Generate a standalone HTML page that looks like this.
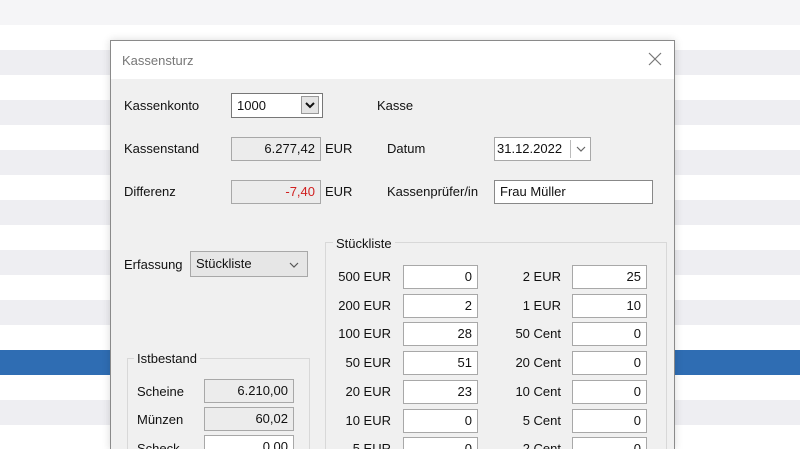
<html><head><style>
html,body{margin:0;width:800px;height:449px;overflow:hidden}
body{background:#fff;font-family:"Liberation Sans",sans-serif;font-size:13px;color:#111;position:relative}
.s{position:absolute;left:0;width:800px;height:25px;background:#eeeef2}
.a{position:absolute}
.dlg{position:absolute;left:110px;top:40px;width:563px;height:409px;background:#f0f0f0;border:1px solid #8a8a8a;border-bottom:none;box-shadow:0 0 8px rgba(0,0,0,.15);overflow:hidden}
.tb{position:absolute;left:0;top:0;width:563px;height:38px;background:#fff}
.box{position:absolute;height:24px;border:1px solid #a8a8a8;background:#fff;box-sizing:border-box;line-height:22px;padding:0 5px;text-align:right}
.ro{background:#ececec}
.lbl{position:absolute;line-height:16px}
.r{text-align:right}
</style></head><body>
<div class="s" style="top:0;background:#f5f5f7"></div>
<div class="s" style="top:50px"></div>
<div class="s" style="top:100px"></div>
<div class="s" style="top:150px"></div>
<div class="s" style="top:200px"></div>
<div class="s" style="top:250px"></div>
<div class="s" style="top:300px"></div>
<div class="s" style="top:350px;background:#2f6db3"></div>
<div class="s" style="top:400px"></div>
<div class="dlg">
<div class="tb"></div>
<div class="lbl" style="left:11px;top:12px;color:#777">Kassensturz</div>
<svg class="a" style="left:537px;top:11px" width="14" height="14"><path d="M1 1L13 13M13 1L1 13" stroke="#777" stroke-width="1.2"/></svg>
<div class="lbl" style="left:13px;top:57px">Kassenkonto</div>
<div class="box" style="left:120px;top:52px;width:92px;height:25px;text-align:left;border-color:#777;line-height:23px">1000</div>
<div class="a" style="left:190px;top:55px;width:18px;height:18px;background:#e4e4e4;border:1px solid #999;box-sizing:border-box"><svg width="16" height="16"><path d="M4 6L8 10L12 6" stroke="#111" stroke-width="2" fill="none"/></svg></div>
<div class="lbl" style="left:266px;top:57px">Kasse</div>
<div class="lbl" style="left:13px;top:100px">Kassenstand</div>
<div class="box ro" style="left:120px;top:96px;width:90px">6.277,42</div>
<div class="lbl" style="left:214px;top:100px">EUR</div>
<div class="lbl" style="left:276px;top:100px">Datum</div>
<div class="box" style="left:383px;top:96px;width:97px;text-align:left;padding:0 2px">31.12.2022</div>
<div class="a" style="left:459px;top:99px;width:1px;height:18px;background:#bbb"></div>
<svg class="a" style="left:463px;top:101px" width="14" height="14"><path d="M3 5L7 9L11 5" stroke="#666" stroke-width="1.2" fill="none"/></svg>
<div class="lbl" style="left:13px;top:143px">Differenz</div>
<div class="box ro" style="left:120px;top:139px;width:90px;color:#d02020">-7,40</div>
<div class="lbl" style="left:214px;top:143px">EUR</div>
<div class="lbl" style="left:276px;top:143px">Kassenprüfer/in</div>
<div class="box" style="left:383px;top:139px;width:159px;text-align:left;border-color:#888">Frau Müller</div>
<div class="lbl" style="left:13px;top:216px">Erfassung</div>
<div class="box ro" style="left:79px;top:210px;width:118px;height:26px;text-align:left;line-height:24px;background:#e6e6e6">Stückliste<svg style="position:absolute;right:6px;top:6px" width="14" height="14"><path d="M3 5L7 9L11 5" stroke="#555" stroke-width="1.2" fill="none"/></svg></div>
<div class="a" style="left:214px;top:201px;width:340px;height:230px;border:1px solid #d8d8d8"></div>
<div class="lbl" style="left:222px;top:195px;background:#f0f0f0;padding:0 3px">Stückliste</div>
<div class="a" style="left:16px;top:317px;width:181px;height:120px;border:1px solid #d8d8d8"></div>
<div class="lbl" style="left:23px;top:310px;background:#f0f0f0;padding:0 3px">Istbestand</div>
<div class="lbl" style="left:26px;top:343px">Scheine</div>
<div class="box ro" style="left:93px;top:338px;width:90px">6.210,00</div>
<div class="lbl" style="left:26px;top:371px">Münzen</div>
<div class="box ro" style="left:93px;top:366px;width:90px">60,02</div>
<div class="lbl" style="left:26px;top:400px">Scheck</div>
<div class="box" style="left:93px;top:394px;width:90px">0,00</div>
<div id="g"></div>
</div>
<script>
var L=["500 EUR","200 EUR","100 EUR","50 EUR","20 EUR","10 EUR","5 EUR"],V=["0","2","28","51","23","0","0"],
R=["2 EUR","1 EUR","50 Cent","20 Cent","10 Cent","5 Cent","2 Cent"],W=["25","10","0","0","0","0","0"],h="";
for(var i=0;i<7;i++){var y=224+i*28.7;
h+='<div class="lbl r" style="left:200px;width:80px;top:'+(y+4)+'px">'+L[i]+'</div>';
h+='<div class="box" style="left:292px;top:'+y+'px;width:75px">'+V[i]+'</div>';
h+='<div class="lbl r" style="left:370px;width:80px;top:'+(y+4)+'px">'+R[i]+'</div>';
h+='<div class="box" style="left:461px;top:'+y+'px;width:75px">'+W[i]+'</div>';}
document.getElementById('g').innerHTML=h;
</script>
</body></html>
